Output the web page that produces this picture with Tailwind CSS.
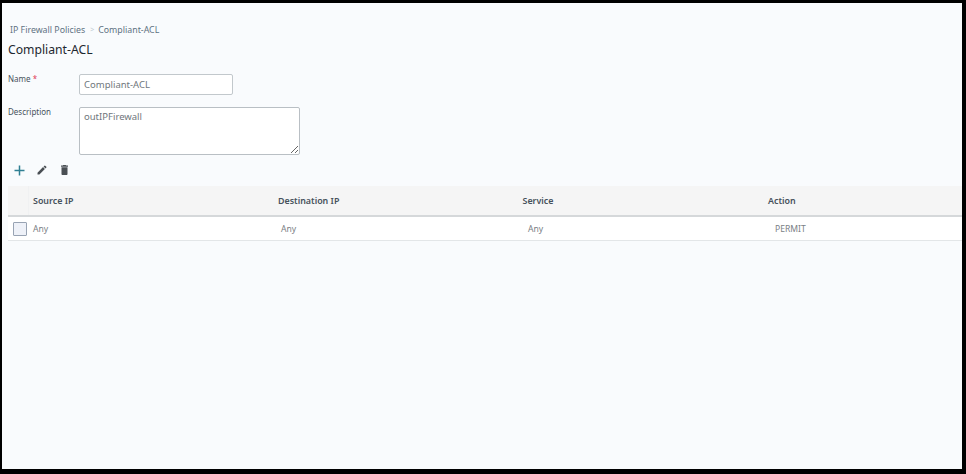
<!DOCTYPE html>
<html lang="en">
<head>
    <meta charset="UTF-8">
    <title>Compliant-ACL</title>
    <script src="https://cdn.jsdelivr.net/npm/@tailwindcss/browser@4"></script>
</head>
<body class="bg-black h-[474px] overflow-hidden font-['Noto_Sans',sans-serif]">
    <div class="ml-[2px] mt-[3px] w-[960px] h-[466px] bg-[#f9fbfd] pl-[6px]">
        <!-- Breadcrumb -->
        <div class="pt-[21px] pl-[2px] flex items-center h-[33px] text-[8.8px] leading-[12px] text-[#5f7282]">
            <span>IP Firewall Policies</span>
            <span class="ml-[5px] mr-[4px] text-[#c3ccd3] text-[7px]">&gt;</span>
            <span>Compliant-ACL</span>
        </div>
        <h1 class="mt-[5px] text-[12.2px] leading-[18px] text-[#1d2730]">Compliant-ACL</h1>

        <!-- Form -->
        <div class="mt-[15px] flex h-[21px]">
            <label class="w-[71px] text-[8px] leading-[10px] text-[#47525c]">Name <span class="text-[#e0405a]">*</span></label>
            <input type="text" value="Compliant-ACL" class="w-[154px] h-[21px] bg-white border border-[#c2c8cc] rounded-[2px] px-[4px] text-[9.5px] text-[#6f767c]">
        </div>
        <div class="mt-[12px] flex h-[48px]">
            <label class="w-[71px] text-[8px] leading-[10px] text-[#47525c]">Description</label>
            <textarea class="w-[221px] h-[48px] bg-white border border-[#b9bfc4] rounded-[2px] px-[4px] py-[2px] text-[9.5px] leading-[13px] text-[#6f767c]">outIPFirewall</textarea>
        </div>

        <!-- Toolbar -->
        <div class="mt-[4px] h-[22px] pl-[5px] flex items-center gap-[10px]">
            <svg class="w-[13px] h-[13px]" viewBox="0 0 13 13"><path d="M6.5 1.5v10M1.5 6.5h10" stroke="#2f7f93" stroke-width="1.5" fill="none"/></svg>
            <svg class="w-[12px] h-[12px]" viewBox="0 0 24 24"><path fill="#4a4f54" d="M3 17.25V21h3.75L17.81 9.94l-3.75-3.75L3 17.25zM20.71 7.04a1 1 0 0 0 0-1.41l-2.34-2.34a1 1 0 0 0-1.41 0l-1.83 1.83 3.75 3.75 1.83-1.83z"/></svg>
            <svg class="ml-[3px] w-[7px] h-[10px]" viewBox="5 3 14 18" preserveAspectRatio="none"><path fill="#4a4f54" d="M6 19c0 1.1.9 2 2 2h8c1.1 0 2-.9 2-2V7H6v12zM19 4h-3.5l-1-1h-5l-1 1H5v2h14V4z"/></svg>
        </div>

        <!-- Table -->
        <div class="mt-[5px]">
            <div class="h-[31px] bg-[#f5f5f5] border-b-2 border-[#d5d8da] grid grid-cols-[21px_245px_244.5px_245.5px_1fr] items-center text-[8.9px] font-semibold text-[#47525c]">
                <div class="h-full border-r border-[#f0f1f2]"></div>
                <div class="pl-[4px]">Source IP</div>
                <div class="pl-[4px]">Destination IP</div>
                <div class="pl-[4px]">Service</div>
                <div class="pl-[4px]">Action</div>
            </div>
            <div class="h-[24px] bg-white border-b border-[#e3e6e8] grid grid-cols-[25px_248px_247px_247px_1fr] items-center text-[8.6px] leading-[12px] text-[#7a8085]">
                <div class="pl-[5px]"><div class="w-[14px] h-[14px] bg-[#eef1f8] border border-[#98a3b3] rounded-[1px]"></div></div>
                <div class="pt-[1px]">Any</div>
                <div class="pt-[1px]">Any</div>
                <div class="pt-[1px]">Any</div>
                <div class="pt-[1px]">PERMIT</div>
            </div>
        </div>
    </div>
</body>
</html>
